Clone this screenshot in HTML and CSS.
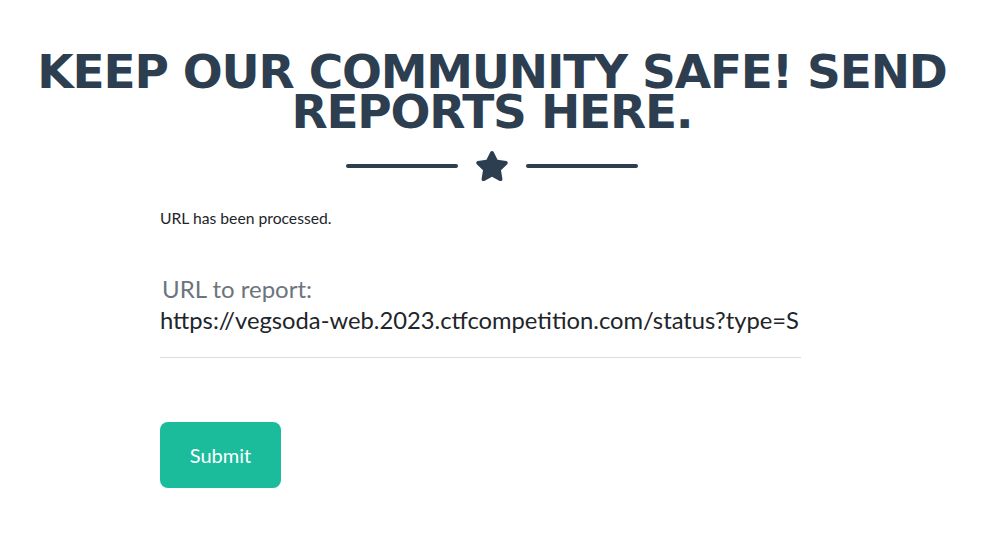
FILE: index.html
```html
<!DOCTYPE html>
<html lang="en">
<head>
<meta charset="utf-8">
<title>Report</title>
<link rel="stylesheet" href="styles.css">
</head>
<body>
<main class="page">
  <h2 class="title">Keep our community safe! Send reports here.</h2>
  <div class="divider">
    <span class="divider-line"></span>
    <svg class="divider-star" viewBox="0 0 576 512" width="34" height="34" aria-hidden="true"><path fill="#2c3e50" d="M259.3 17.8L194 150.2 47.9 171.5c-26.2 3.8-36.7 36.1-17.7 54.6l105.7 103-25 145.5c-4.5 26.3 23.2 46 46.4 33.7L288 439.6l130.7 68.7c23.2 12.2 50.9-7.4 46.4-33.7l-25-145.5 105.7-103c19-18.5 8.5-50.8-17.7-54.6L382 150.2 316.7 17.8c-11.7-23.6-45.6-23.9-57.4 0z"/></svg>
    <span class="divider-line"></span>
  </div>
  <form class="report-form">
    <p class="message">URL has been processed.</p>
    <div class="field">
      <label class="field-label" for="url">URL to report:</label>
      <input class="field-input" id="url" type="text" value="https://vegsoda-web.2023.ctfcompetition.com/status?type=S">
    </div>
    <button class="btn-submit" type="button">Submit</button>
  </form>
</main>
</body>
</html>
```
FILE: styles.css
```css
html, body {
  margin: 0;
  padding: 0;
  background: #ffffff;
}
body {
  font-family: "Lato", "Liberation Sans", sans-serif;
  color: #212529;
}
.page {
  width: 984px;
  display: flex;
  flex-direction: column;
  align-items: center;
}
.title {
  margin: 52px 0 0;
  font-family: "DejaVu Sans", sans-serif;
  font-weight: 700;
  font-size: 47px;
  line-height: 40px;
  letter-spacing: -1.2px;
  text-transform: uppercase;
  text-align: center;
  color: #2c3e50;
  width: 940px;
}
.divider {
  margin-top: 17px;
  display: flex;
  align-items: center;
  gap: 17px;
}
.divider-line {
  display: block;
  width: 112px;
  height: 4px;
  border-radius: 2px;
  background: #2c3e50;
}
.divider-star {
  display: block;
}
.report-form {
  align-self: flex-start;
  margin-left: 160px;
  width: 641px;
  display: flex;
  flex-direction: column;
  align-items: flex-start;
}
.message {
  margin: 25px 0 0;
  font-size: 15.7px;
  line-height: 20px;
}
.field {
  margin-top: 45px;
  width: 100%;
  border-bottom: 1px solid #dcdcdc;
  padding-bottom: 20px;
  display: flex;
  flex-direction: column;
}
.field-label {
  font-size: 24px;
  line-height: 31px;
  color: #6c757d;
  padding-left: 2px;
}
.field-input {
  font-family: "Lato", "Liberation Sans", sans-serif;
  font-size: 23.75px;
  line-height: 33px;
  height: 33px;
  border: none;
  padding: 0;
  margin: 0;
  outline: none;
  color: #212529;
  background: transparent;
  width: 100%;
}
.btn-submit {
  margin-top: 64px;
  width: 121px;
  height: 66px;
  border: none;
  border-radius: 8px;
  background: #1abc9c;
  color: #ffffff;
  font-family: "Lato", "Liberation Sans", sans-serif;
  font-size: 20px;
  padding: 0;
  cursor: pointer;
}
```
